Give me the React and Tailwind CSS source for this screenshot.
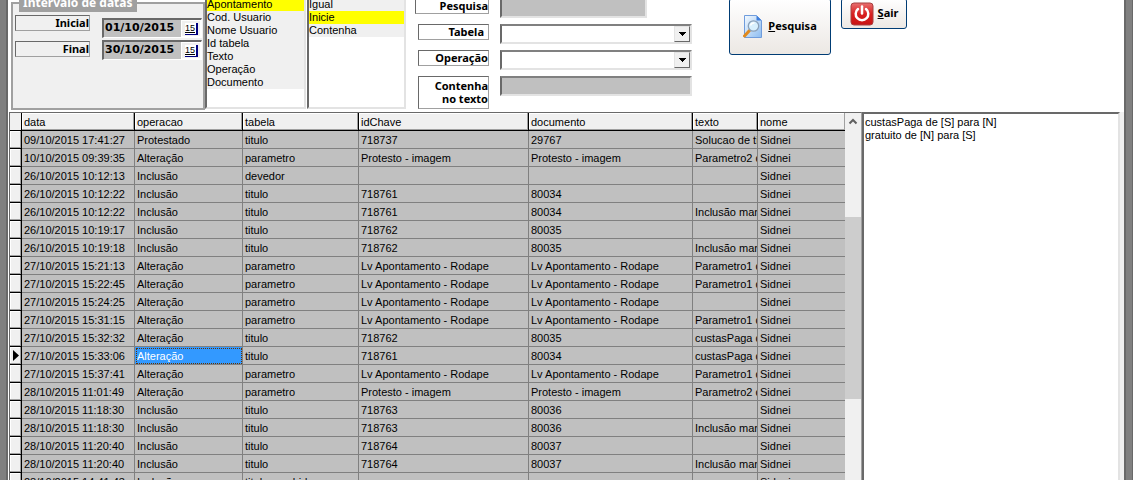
import React, { useState } from "react";

const columns = [
  { key: "data", width: "w-[113px]" },
  { key: "operacao", width: "w-[108px]" },
  { key: "tabela", width: "w-[116px]" },
  { key: "idChave", width: "w-[170px]" },
  { key: "documento", width: "w-[164px]" },
  { key: "texto", width: "w-[65px]" },
  { key: "nome", width: "w-[87px]" },
];

const rows = [
  ["09/10/2015 17:41:27", "Protestado", "titulo", "718737", "29767", "Solucao de titulo", "Sidnei"],
  ["10/10/2015 09:39:35", "Alteração", "parametro", "Protesto - imagem", "Protesto - imagem", "Parametro2 de", "Sidnei"],
  ["26/10/2015 10:12:13", "Inclusão", "devedor", "", "", "", "Sidnei"],
  ["26/10/2015 10:12:22", "Inclusão", "titulo", "718761", "80034", "", "Sidnei"],
  ["26/10/2015 10:12:22", "Inclusão", "titulo", "718761", "80034", "Inclusão manual", "Sidnei"],
  ["26/10/2015 10:19:17", "Inclusão", "titulo", "718762", "80035", "", "Sidnei"],
  ["26/10/2015 10:19:18", "Inclusão", "titulo", "718762", "80035", "Inclusão manual", "Sidnei"],
  ["27/10/2015 15:21:13", "Alteração", "parametro", "Lv Apontamento - Rodape", "Lv Apontamento - Rodape", "Parametro1 de", "Sidnei"],
  ["27/10/2015 15:22:45", "Alteração", "parametro", "Lv Apontamento - Rodape", "Lv Apontamento - Rodape", "Parametro1 de", "Sidnei"],
  ["27/10/2015 15:24:25", "Alteração", "parametro", "Lv Apontamento - Rodape", "Lv Apontamento - Rodape", "", "Sidnei"],
  ["27/10/2015 15:31:15", "Alteração", "parametro", "Lv Apontamento - Rodape", "Lv Apontamento - Rodape", "Parametro1 de", "Sidnei"],
  ["27/10/2015 15:32:32", "Alteração", "titulo", "718762", "80035", "custasPaga de", "Sidnei"],
  ["27/10/2015 15:33:06", "Alteração", "titulo", "718761", "80034", "custasPaga de", "Sidnei"],
  ["27/10/2015 15:37:41", "Alteração", "parametro", "Lv Apontamento - Rodape", "Lv Apontamento - Rodape", "Parametro1 de", "Sidnei"],
  ["28/10/2015 11:01:49", "Alteração", "parametro", "Protesto - imagem", "Protesto - imagem", "Parametro2 de", "Sidnei"],
  ["28/10/2015 11:18:30", "Inclusão", "titulo", "718763", "80036", "", "Sidnei"],
  ["28/10/2015 11:18:30", "Inclusão", "titulo", "718763", "80036", "Inclusão manual", "Sidnei"],
  ["28/10/2015 11:20:40", "Inclusão", "titulo", "718764", "80037", "", "Sidnei"],
  ["28/10/2015 11:20:40", "Inclusão", "titulo", "718764", "80037", "Inclusão manual", "Sidnei"],
  ["28/10/2015 14:41:43", "Inclusão", "titulo recebido", "", "", "", "Sidnei"],
];

const fields = ["Apontamento", "Cod. Usuario", "Nome Usuario", "Id tabela", "Texto", "Operação", "Documento"];
const modes = ["Igual", "Inicie", "Contenha"];

const sunken = "border-2 border-t-[#808080] border-l-[#696969] border-r-[#e3e3e3] border-b-[#e3e3e3]";
const labelBox = "block border border-t-[#696969] border-l-[#696969] border-r-[#a0a0a0] border-b-[#a0a0a0] text-right font-bold leading-[13px] font-['Noto_Sans',sans-serif]";

const DateField = ({ id, label, value, onChange }) => (
  <div className="flex h-5 w-[100px] items-center border-t-2 border-r border-b border-l-2 border-t-[#696969] border-r-white border-b-white border-l-[#696969] bg-[#c0c0c0] pl-px">
    <input
      id={id}
      type="text"
      value={value}
      onChange={(e) => onChange(e.target.value)}
      className="w-[76px] bg-transparent font-['DejaVu_Sans',sans-serif] font-bold outline-none"
    />
    <button type="button" aria-label={`Calendario ${label}`} className="flex h-[17px] flex-1 items-center justify-center border border-white bg-[#f0f0f0]">
      <span className="h-3 w-[13px] border-r-2 border-b border-[#000080] bg-white text-center text-[9px] leading-[11px] underline">15</span>
    </button>
  </div>
);

const ListBox = ({ label, items, selected, onSelect, width }) => (
  <ul role="listbox" aria-label={label} className={`${width} ${sunken} flex h-[113px] flex-col bg-white`}>
    {items.map((item) => (
      <li
        key={item}
        role="option"
        aria-selected={item === selected}
        onClick={() => onSelect(item)}
        className={`h-[13px] leading-[13px] ${item === selected ? "bg-[#ffff00]" : "bg-[#f0f0f0]"}`}
      >
        {item}
      </li>
    ))}
  </ul>
);

const DropDown = ({ id }) => (
  <div className={`${sunken} relative h-5 w-48`}>
    <select id={id} className="block h-4 w-full appearance-none bg-white outline-none">
      <option value=""></option>
    </select>
    <span className="pointer-events-none absolute top-0 right-0 flex h-4 w-4 items-center justify-center border border-t-[#e3e3e3] border-l-[#e3e3e3] border-r-[#696969] border-b-[#696969] bg-[#f0f0f0]">
      <svg width="7" height="4" viewBox="0 0 7 4" shapeRendering="crispEdges">
        <path d="M0 0h7v1h-1v1h-1v1h-1v1h-1v-1h-1v-1h-1v-1h-1z" fill="#000" />
      </svg>
    </span>
  </div>
);

const SearchIcon = () => (
  <svg width="20" height="23" viewBox="0 0 20 23">
    <defs>
      <linearGradient id="sheet" x1="0" y1="0" x2="1" y2="1">
        <stop offset="0" stopColor="#f4faff" />
        <stop offset="1" stopColor="#8cbcf0" />
      </linearGradient>
    </defs>
    <path d="M1.500 .5h12l5 5v17h-17z" fill="url(#sheet)" stroke="#6f9cdc" />
    <path d="M13.500 .5v5h5z" fill="#3f7fdc" />
    <path d="M6.500 15.500L1.500 21" stroke="#e08a1e" strokeWidth="3" strokeLinecap="round" />
    <circle cx="10.500" cy="11" r="5.200" fill="#d8f0fd" stroke="#8aa0b8" strokeWidth="1.300" />
    <path d="M7.500 10.500q1-3 4-2.500" stroke="#fff" strokeWidth="1.500" fill="none" />
  </svg>
);

const PowerIcon = () => (
  <svg width="24" height="24" viewBox="0 0 24 24">
    <defs>
      <linearGradient id="power" x1="0" y1="0" x2="0" y2="1">
        <stop offset="0" stopColor="#e87070" />
        <stop offset=".5" stopColor="#d82020" />
        <stop offset="1" stopColor="#c81414" />
      </linearGradient>
    </defs>
    <rect x="1" y="1" width="22" height="22" rx="3" fill="url(#power)" stroke="#a84040" />
    <path d="M8 7a6.300 6.300 0 1 0 8 0" fill="none" stroke="#fff" strokeWidth="2.500" strokeLinecap="round" />
    <path d="M12 4.500v7" stroke="#fff" strokeWidth="2.500" strokeLinecap="round" />
  </svg>
);

const Filters = () => {
  const [inicial, setInicial] = useState("01/10/2015");
  const [final, setFinal] = useState("30/10/2015");
  const [field, setField] = useState("Apontamento");
  const [mode, setMode] = useState("Inicie");

  return (
    <form onSubmit={(e) => e.preventDefault()} className="flex h-[112px] shrink-0 items-end overflow-hidden pl-[3px]">
      <fieldset className="mb-[2px] h-[116px] w-[194px] shrink-0 border-2 border-[#a0a0a0] bg-[#f0f0f0]">
        <legend className="ml-[6px] h-[18px] bg-[#a0a0a0] px-1 font-['Noto_Sans',sans-serif] text-[12px] leading-[18px] font-bold text-white">
          Intervalo de datas
        </legend>
        <div className="flex justify-between pr-px pl-[2px]">
          <div className="flex flex-col gap-[10px] pt-[3px]">
            <label htmlFor="inicial" className={`${labelBox} h-4 w-[75px] bg-[#f0f0f0]`}>Inicial</label>
            <label htmlFor="final" className={`${labelBox} h-4 w-[75px] bg-[#f0f0f0]`}>Final</label>
          </div>
          <div className="flex flex-col gap-[2px] pt-[6px]">
            <DateField id="inicial" label="Inicial" value={inicial} onChange={setInicial} />
            <DateField id="final" label="Final" value={final} onChange={setFinal} />
          </div>
        </div>
      </fieldset>

      <div className="mb-[3px] flex shrink-0 gap-px">
        <ListBox label="Campo" items={fields} selected={field} onSelect={setField} width="w-[101px]" />
        <ListBox label="Modo" items={modes} selected={mode} onSelect={setMode} width="w-[99px]" />
      </div>

      <div className="mb-[3px] ml-[9px] grid shrink-0 grid-cols-[74px_192px] grid-rows-[26px_26px_26px_33px] items-start justify-items-end gap-x-[11px]">
        <label htmlFor="pesquisa" className={`${labelBox} h-4 w-[74px] bg-white`}>Pesquisa</label>
        <input id="pesquisa" type="text" className={`${sunken} h-5 w-[147px] justify-self-start bg-[#c0c0c0] outline-none`} />
        <label htmlFor="tabela" className={`${labelBox} h-4 w-[71px] bg-white pr-1`}>Tabela</label>
        <DropDown id="tabela" />
        <label htmlFor="operacao" className={`${labelBox} h-4 w-[71px] bg-white`}>Operação</label>
        <DropDown id="operacao" />
        <label htmlFor="contenha" className={`${labelBox} h-[33px] w-[71px] bg-white pt-[2px] pl-3`}>Contenha no texto</label>
        <input id="contenha" type="text" className={`${sunken} h-5 w-48 bg-[#c0c0c0] outline-none`} />
      </div>

      <div className="ml-[37px] flex h-full shrink-0 items-start gap-[10px]">
        <button type="submit" className="-mt-[2px] flex h-[57px] w-[102px] items-center justify-center gap-[5px] rounded-[3px] border border-[#003c74] bg-linear-to-b from-white to-[#ece8e4] font-['Noto_Sans',sans-serif] font-bold">
          <SearchIcon />
          <span><u>P</u>esquisa</span>
        </button>
        <button type="button" className="-mt-[2px] flex h-[31px] w-[66px] items-center justify-center gap-1 rounded-[3px] border border-[#003c74] bg-linear-to-b from-white to-[#ece8e4] font-['Noto_Sans',sans-serif] font-bold">
          <PowerIcon />
          <span><u>S</u>air</span>
        </button>
      </div>
    </form>
  );
};

const Grid = () => {
  const [current, setCurrent] = useState(12);

  return (
    <div className="flex shrink-0 overflow-hidden border-t border-r border-l border-t-[#696969] border-r-[#a0a0a0] border-l-[#696969]">
      <table className="w-[835px] table-fixed border-separate border-spacing-0 self-start">
        <thead>
          <tr className="h-[18px]">
            <th className="w-3 border-r border-b border-black bg-[#f0f0f0] p-0"></th>
            {columns.map((c) => (
              <th
                key={c.key}
                className={`${c.width} border-r border-b border-black bg-[#f0f0f0] p-0 pt-[2px] pl-[2px] text-left leading-[15px] font-normal shadow-[inset_-1px_-1px_#a0a0a0,inset_1px_1px_#fff] last:border-r-0`}
              >
                {c.key}
              </th>
            ))}
          </tr>
        </thead>
        <tbody>
          {rows.map((row, i) => (
            <tr key={i} onClick={() => setCurrent(i)} className="h-[18px]">
              <td className="border-r border-b border-black bg-[#f0f0f0] p-0 shadow-[inset_-1px_-1px_#a0a0a0,inset_1px_1px_#fff]">
                {i === current && (
                  <svg width="11" height="11" viewBox="0 0 11 11" className="block">
                    <path d="M3 0v11l6-5.500z" fill="#000" />
                  </svg>
                )}
              </td>
              {row.map((cell, j) => (
                <td
                  key={j}
                  className={`overflow-hidden border-r border-b border-[#808080] p-0 pt-[2px] pl-[2px] leading-[15px] whitespace-nowrap last:border-r-0 ${
                    i === current && j === 1
                      ? "bg-[#3399ff] text-white outline-1 -outline-offset-2 outline-dotted outline-[#663300]"
                      : "bg-[#c0c0c0]"
                  }`}
                >
                  {cell}
                </td>
              ))}
            </tr>
          ))}
        </tbody>
      </table>
      <div className="flex w-4 flex-col items-center bg-[#f0f0f0]">
        <svg width="16" height="17" viewBox="0 0 16 17" className="shrink-0">
          <path d="M4.500 10.500L8 7l3.500 3.500" fill="none" stroke="#606060" strokeWidth="2" />
        </svg>
        <div className="mt-[87px] h-[182px] w-full bg-[#cdcdcd]"></div>
      </div>
    </div>
  );
};

const App = () => {
  return (
    <div className="flex h-screen overflow-hidden bg-white font-['Liberation_Sans',Arial,sans-serif] text-[11px] text-black">
      <div className="w-2 shrink-0 border-r-2 border-[#696969] bg-[#808080]"></div>
      <main className="flex min-w-0 flex-1 flex-col">
        <Filters />
        <div className="flex min-h-0 flex-1 pl-px">
          <Grid />
          <textarea
            aria-label="Detalhe"
            readOnly
            className="min-w-0 flex-1 resize-none border-2 border-t-[#696969] border-r-[#e3e3e3] border-b-0 border-l-[#696969] bg-white pt-[2px] pl-px leading-[13px] outline-none"
            value={"custasPaga de [S] para [N]\ngratuito de [N] para [S]"}
          />
          <div className="w-1 shrink-0 bg-[#f0f0f0]"></div>
        </div>
      </main>
      <div className="w-[9px] shrink-0 border-r border-l-2 border-[#696969] bg-[#808080]"></div>
    </div>
  );
};

export default App;
